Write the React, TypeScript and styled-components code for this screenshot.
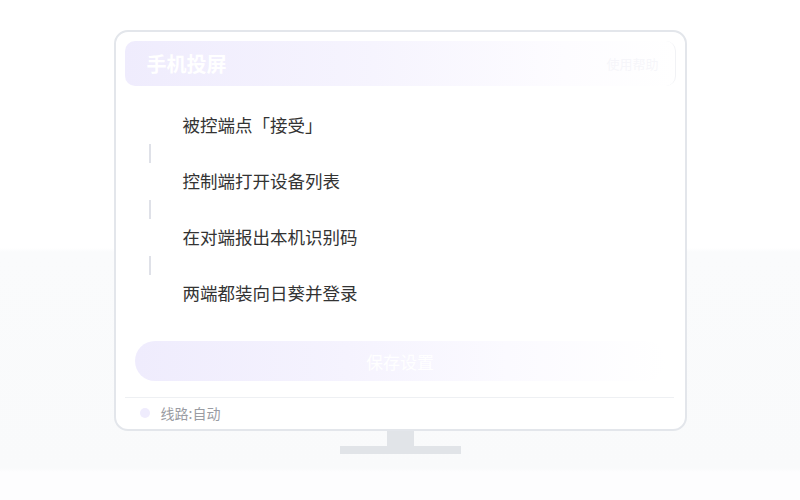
import React from 'react';
import styled, { createGlobalStyle } from 'styled-components';

const steps = [
  '被控端点「接受」',
  '控制端打开设备列表',
  '在对端报出本机识别码',
  '两端都装向日葵并登录',
];

const GlobalStyle = createGlobalStyle`
  html, body {
    margin: 0;
    padding: 0;
  }

  body {
    font-family: "Noto Sans CJK SC", "Noto Sans", sans-serif;
    background: linear-gradient(
      to bottom,
      #ffffff 0,
      #ffffff 248px,
      #fafbfc 252px,
      #f9fafb 468px,
      #fdfdfe 472px
    );
    height: 500px;
    overflow: hidden;
  }
`;

const Page = styled.div`
  height: 500px;
  display: flex;
  flex-direction: column;
  align-items: center;
  padding-top: 30px;
  box-sizing: border-box;
`;

const Monitor = styled.div`
  width: 573px;
  height: 401px;
  box-sizing: border-box;
  border: 2px solid #e3e6eb;
  border-radius: 14px;
  background: #ffffff;
  padding: 9px 9px 0;
  display: flex;
  flex-direction: column;
`;

const Header = styled.div`
  height: 45px;
  border-radius: 10px;
  display: flex;
  align-items: center;
  justify-content: space-between;
  padding: 0 22px;
  background: linear-gradient(to right, #efecfd 0%, #f6f4fe 45%, #fdfcff 80%, #ffffff 100%);
  border-right: 1px solid #f1f2f5;
`;

const Title = styled.div`
  color: #ffffff;
  font-size: 20px;
  font-weight: 700;
`;

const HeaderHint = styled.div`
  color: rgba(236, 236, 244, 0.45);
  font-size: 13px;
  margin-right: -6px;
`;

const Steps = styled.div`
  margin-top: 25px;
  padding-left: 58px;
  display: flex;
  flex-direction: column;
`;

const Step = styled.div`
  height: 28px;
  line-height: 28px;
  font-size: 17.5px;
  color: #333333;
`;

const Connector = styled.div`
  height: 28px;
  display: flex;
  align-items: center;
  margin-left: -34px;

  &::before {
    content: '';
    width: 2px;
    height: 19px;
    background: #dfe1e8;
  }
`;

const SaveButton = styled.div`
  margin: 34px 10px 0;
  height: 40px;
  border-radius: 20px;
  display: flex;
  align-items: center;
  justify-content: center;
  color: #ffffff;
  font-size: 17px;
  background: linear-gradient(to right, #efecfd 0%, #f5f3fe 40%, #fbfaff 70%, #ffffff 100%);
`;

const Divider = styled.div`
  margin: 16px 2px 0 0;
  height: 1px;
  background: #eef0f3;
`;

const Footer = styled.div`
  flex: 1;
  display: flex;
  align-items: center;
  gap: 11px;
  padding-left: 15px;
  padding-bottom: 2px;
`;

const Dot = styled.span`
  width: 10px;
  height: 10px;
  border-radius: 50%;
  background: #efecfd;
`;

const Route = styled.span`
  color: #9a9ca3;
  font-size: 14px;
`;

const Neck = styled.div`
  width: 27px;
  height: 15px;
  background: #e1e4e8;
`;

const Base = styled.div`
  width: 121px;
  height: 8px;
  background: #e1e4e8;
`;

export default function App() {
  return (
    <>
      <GlobalStyle />
      <Page>
        <Monitor>
          <Header>
            <Title>手机投屏</Title>
            <HeaderHint>使用帮助</HeaderHint>
          </Header>
          <Steps>
            {steps.map((text, i) => (
              <React.Fragment key={text}>
                {i > 0 && <Connector />}
                <Step>{text}</Step>
              </React.Fragment>
            ))}
          </Steps>
          <SaveButton>保存设置</SaveButton>
          <Divider />
          <Footer>
            <Dot />
            <Route>线路:自动</Route>
          </Footer>
        </Monitor>
        <Neck />
        <Base />
      </Page>
    </>
  );
}
